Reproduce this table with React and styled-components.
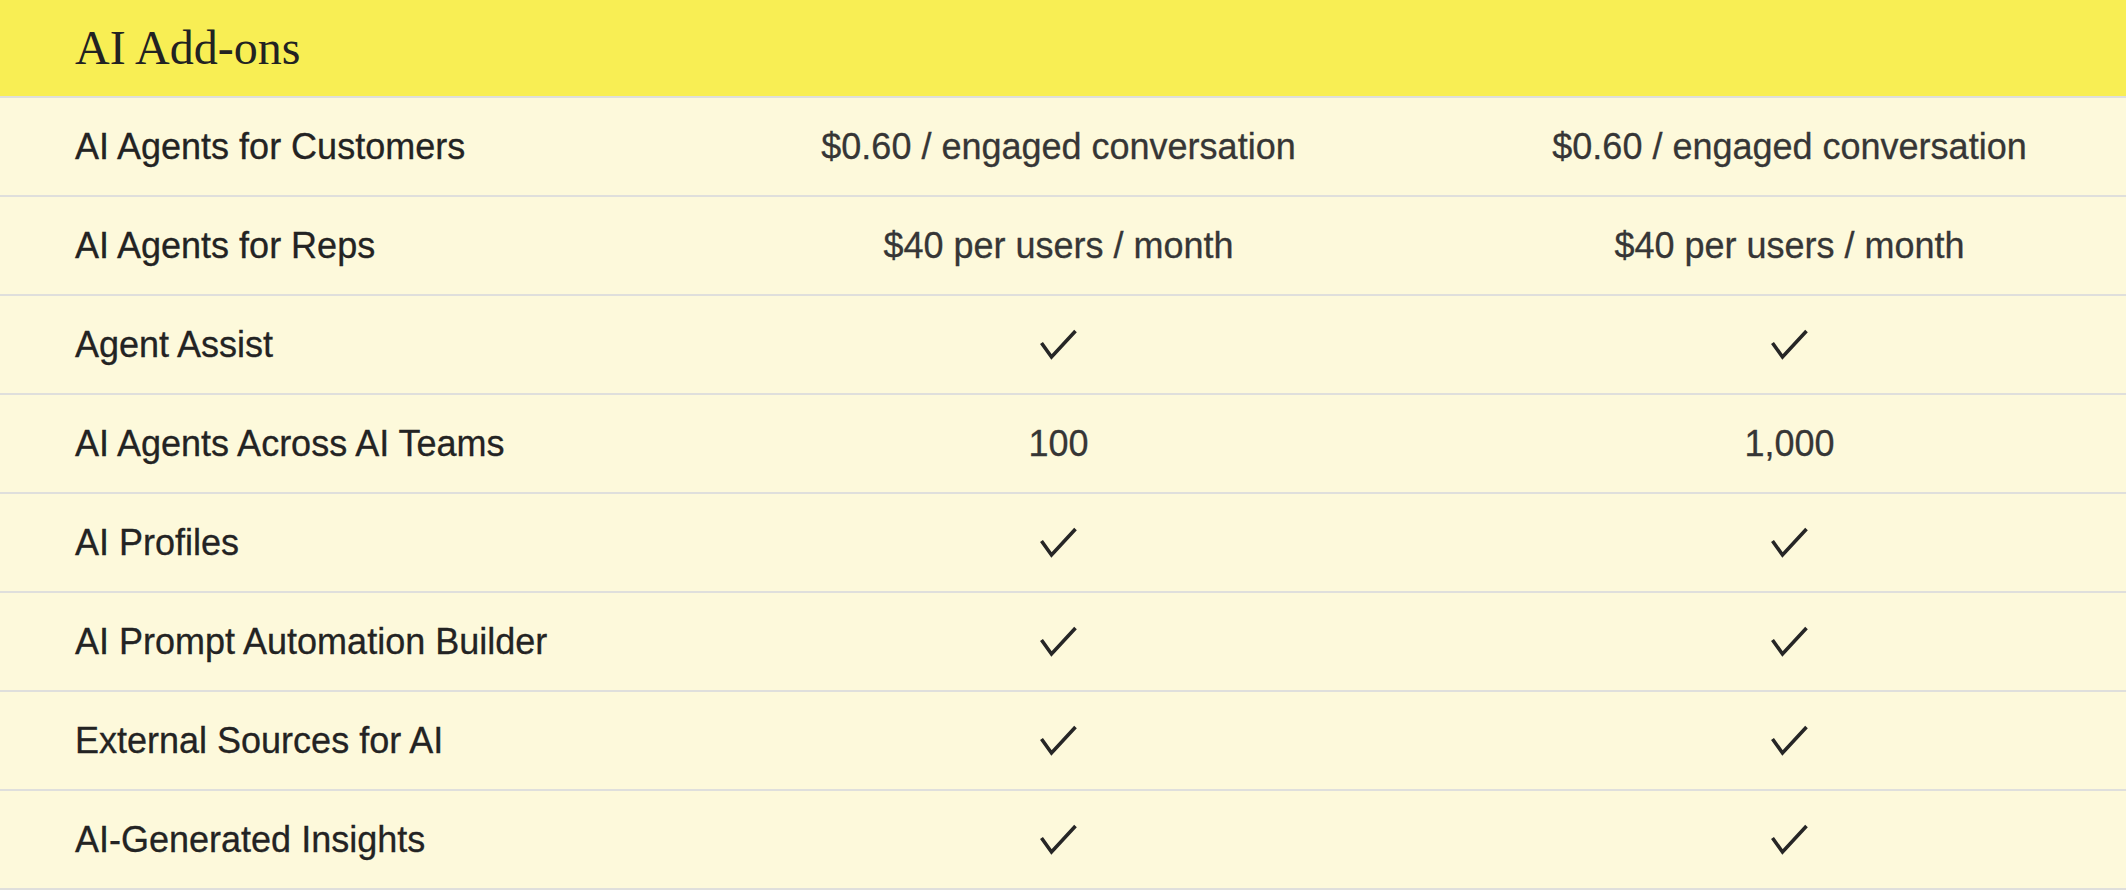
import React from 'react';
import styled, { createGlobalStyle } from 'styled-components';

const GlobalStyle = createGlobalStyle`
  html, body {
    margin: 0;
    padding: 0;
    background: #fdf9db;
    overflow: hidden;
  }
`;

const Table = styled.section`
  width: 2126px;
  background: #fdf9db;
  color: #262626;
  font-family: "Liberation Sans", Arial, sans-serif;
`;

const Header = styled.div`
  height: 96px;
  display: flex;
  align-items: center;
  padding-left: 75px;
  background: #f8ee54;
  border-bottom: 2px solid #dfdfdc;
`;

const Title = styled.h2`
  margin: 0 0 2px;
  font-family: "Liberation Serif", "Times New Roman", serif;
  font-weight: 400;
  font-size: 48px;
  color: #222;
`;

const Row = styled.div`
  height: 97px;
  display: grid;
  grid-template-columns: 618px 731px 731px;
  align-items: center;
  padding-left: 75px;
  border-bottom: 2px solid #dfdfdc;
`;

const Label = styled.div`
  font-size: 36px;
  color: #232323;
  white-space: nowrap;
  -webkit-text-stroke: 0.3px #232323;
`;

const Cell = styled.div`
  display: flex;
  justify-content: center;
  align-items: center;
  font-size: 36px;
  color: #363636;
  white-space: nowrap;
  -webkit-text-stroke: 0.3px #363636;
`;

const Check = () => (
  <svg width="37" height="31" viewBox="0 0 37 31" fill="none">
    <polyline
      points="1.5,14 11.5,28 35.5,2"
      stroke="#262626"
      strokeWidth="3.6"
      strokeLinejoin="miter"
    />
  </svg>
);

const rows = [
  { label: 'AI Agents for Customers', values: ['$0.60 / engaged conversation', '$0.60 / engaged conversation'] },
  { label: 'AI Agents for Reps', values: ['$40 per users / month', '$40 per users / month'] },
  { label: 'Agent Assist', values: [true, true] },
  { label: 'AI Agents Across AI Teams', values: ['100', '1,000'] },
  { label: 'AI Profiles', values: [true, true] },
  { label: 'AI Prompt Automation Builder', values: [true, true] },
  { label: 'External Sources for AI', values: [true, true] },
  { label: 'AI-Generated Insights', values: [true, true] },
];

const App = () => (
  <>
    <GlobalStyle />
    <Table>
      <Header>
        <Title>AI Add-ons</Title>
      </Header>
      {rows.map(row => (
        <Row key={row.label}>
          <Label>{row.label}</Label>
          {row.values.map((v, i) => (
            <Cell key={i}>{v === true ? <Check /> : v}</Cell>
          ))}
        </Row>
      ))}
    </Table>
  </>
);

export default App;
